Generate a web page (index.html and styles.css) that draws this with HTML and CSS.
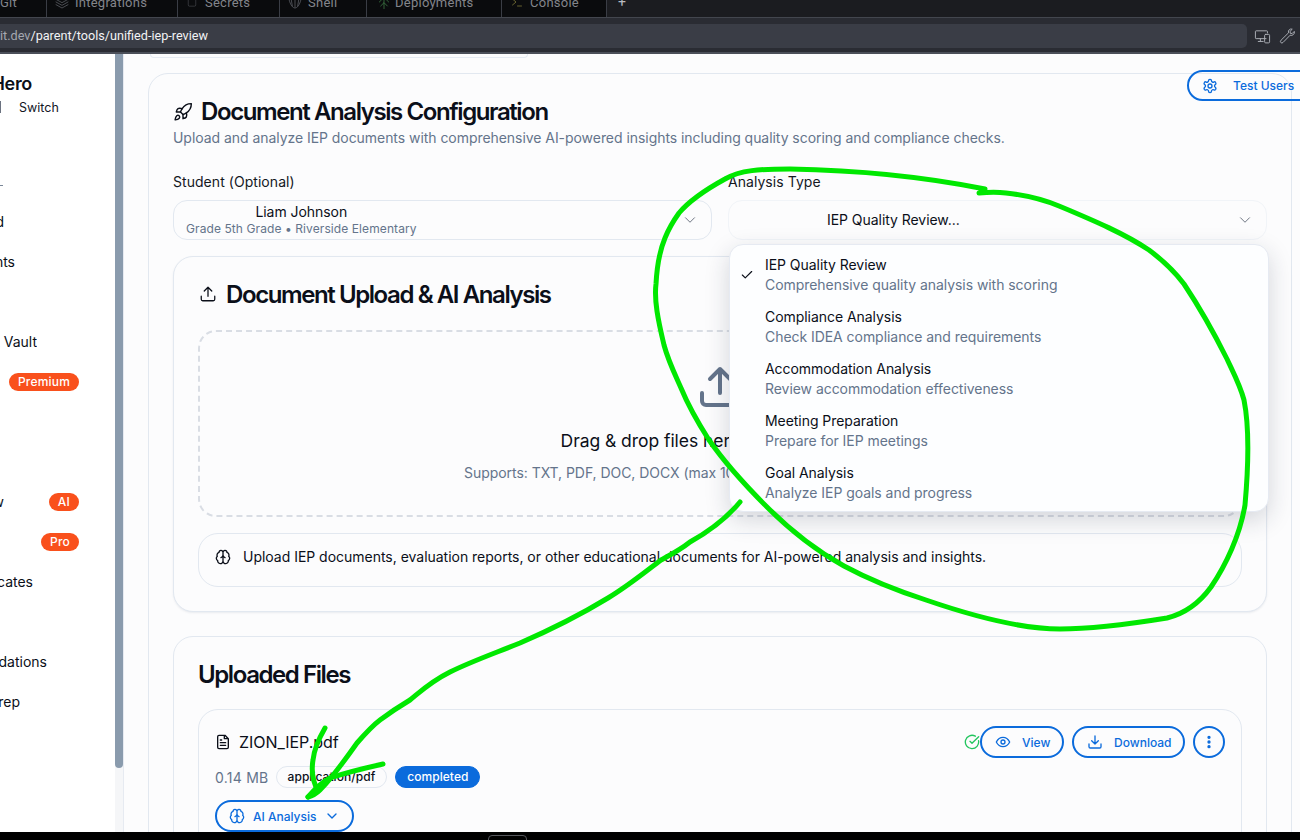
FILE: index.html
```html
<!DOCTYPE html>
<html lang="en">
<head>
<meta charset="utf-8">
<title>Unified IEP Review</title>
<link rel="stylesheet" href="styles.css">
</head>
<body>
<div class="app">
  <div class="tabs">
    <div class="tab tab-git"><span>Git</span></div>
    <div class="tab tab-int"><svg class="ti" viewBox="0 0 24 24"><path d="M12 3 3 8l9 5 9-5-9-5zM3 12l9 5 9-5M3 16l9 5 9-5"/></svg><span>Integrations</span></div>
    <div class="tab tab-sec"><svg class="ti ti-s" viewBox="0 0 24 24"><rect x="3" y="4" width="18" height="18" rx="3"/></svg><span>Secrets</span></div>
    <div class="tab tab-she"><svg class="ti" viewBox="0 0 24 24"><path d="M3 8c2 9 6 13 9 13s7-4 9-13M8 18 6 6M12 20V4M16 18l2-12"/></svg><span>Shell</span></div>
    <div class="tab tab-dep"><svg class="ti ti-g" viewBox="0 0 24 24"><path d="M12 22V8M5 12l7-7 7 7M7 18l5-5 5 5"/></svg><span>Deployments</span></div>
    <div class="tab tab-con"><svg class="ti ti-y" viewBox="0 0 24 24"><path d="m3 6 7 6-7 6M13 20h8"/></svg><span>Console</span></div>
    <div class="tab-plus">+</div>
  </div>
  <div class="urlrow">
    <div class="urlbar"><span class="url-host">it.dev</span><span class="url-path">/parent/tools/unified-iep-review</span></div>
    <svg class="chrome-ic" viewBox="0 0 24 24"><path d="M17 15H3a1 1 0 0 1-1-1V5a1 1 0 0 1 1-1h15a1 1 0 0 1 1 1v2M9 15v4M6 19h7"/><rect x="15" y="9" width="7" height="12" rx="1.5"/></svg>
    <svg class="chrome-ic" viewBox="0 0 24 24"><path d="M14.7 6.3a4 4 0 0 1 5.4-4.6l-3.1 3.1.3 2.7 2.7.3 3-3a4.5 4.5 0 0 1-5.9 5.4L7 20.5a2.1 2.1 0 0 1-3-3z"/></svg>
  </div>

  <div class="content">
    <aside class="sidebar">
      <div class="side-inner">
        <div class="brand">Hero</div>
        <div class="switch-row"><span class="switch-bar"></span><span>Switch</span></div>
        <div class="nav-dash"></div>
        <div class="nav-row"><span class="nav-label w-d">Dashboard</span></div>
        <div class="nav-row"><span class="nav-label w-s">Students</span></div>
        <div class="nav-row skip"><span class="nav-label w-v">Document Vault</span></div>
        <div class="nav-row"><span class="badge badge-prem">Premium</span></div>
        <div class="nav-row skip2"><span class="nav-label w-d">IEP Review</span><span class="badge">AI</span></div>
        <div class="nav-row"><span class="badge">Pro</span></div>
        <div class="nav-row"><span class="nav-label w-a">Advocates</span></div>
        <div class="nav-row skip"><span class="nav-label w-r">Recommendations</span></div>
        <div class="nav-row"><span class="nav-label w-m">Meeting Prep</span></div>
      </div>
      <div class="scrollbar"><div class="thumb"></div></div>
    </aside>

    <main class="main">
      <div class="prev-card"></div>
      <section class="card config">
        <h1 class="h-main"><svg class="ic-22" viewBox="0 0 24 24"><path d="M4.5 16.5c-1.5 1.3-2 5-2 5s3.700-.5 5-2c.7-.8.700-2.100-.1-2.900a2.200 2.200 0 0 0-2.900-.1z"/><path d="m12 15-3-3a22 22 0 0 1 2-3.950A12.900 12.900 0 0 1 22 2c0 2.700-.8 7.500-6 11a22.400 22.400 0 0 1-4 2z"/><path d="M9 12H4s.55-3.030 2-4c1.620-1.080 5 0 5 0M12 15v5s3.030-.55 4-2c1.080-1.620 0-5 0-5"/></svg>Document Analysis Configuration</h1>
        <p class="subtitle">Upload and analyze IEP documents with comprehensive AI-powered insights including quality scoring and compliance checks.</p>

        <div class="fields">
          <div class="field">
            <label class="field-label">Student (Optional)</label>
            <div class="select select-student">
              <div class="select-val"><div class="sv-name">Liam Johnson</div><div class="sv-sub">Grade 5th Grade • Riverside Elementary</div></div>
              <svg class="chev" viewBox="0 0 24 24"><path d="m6 9 6 6 6-6"/></svg>
            </div>
          </div>
          <div class="field">
            <label class="field-label">Analysis Type</label>
            <div class="select select-type">
              <div class="type-val">IEP Quality Review...</div>
              <svg class="chev" viewBox="0 0 24 24"><path d="m6 9 6 6 6-6"/></svg>
            </div>
            <div class="menu">
              <div class="menu-item"><svg class="check" viewBox="0 0 24 24"><path d="M20 6 9 17l-5-5"/></svg><div class="mi-t">IEP Quality Review</div><div class="mi-d">Comprehensive quality analysis with scoring</div></div>
              <div class="menu-item"><div class="mi-t">Compliance Analysis</div><div class="mi-d">Check IDEA compliance and requirements</div></div>
              <div class="menu-item"><div class="mi-t">Accommodation Analysis</div><div class="mi-d">Review accommodation effectiveness</div></div>
              <div class="menu-item"><div class="mi-t">Meeting Preparation</div><div class="mi-d">Prepare for IEP meetings</div></div>
              <div class="menu-item"><div class="mi-t">Goal Analysis</div><div class="mi-d">Analyze IEP goals and progress</div></div>
            </div>
          </div>
        </div>

        <section class="card inner upload">
          <h2 class="h-sec"><svg class="ic-18" viewBox="0 0 24 24"><path d="M21 15v4a2 2 0 0 1-2 2H5a2 2 0 0 1-2-2v-4M17 8l-5-5-5 5M12 3v12"/></svg>Document Upload &amp; AI Analysis</h2>
          <div class="drop">
            <svg class="drop-ic" viewBox="0 0 24 24"><path d="M21 15v4a2 2 0 0 1-2 2H5a2 2 0 0 1-2-2v-4M17 8l-5-5-5 5M12 3v12"/></svg>
            <div class="drop-t">Drag &amp; drop files here or click to select</div>
            <div class="drop-s">Supports: TXT, PDF, DOC, DOCX (max 10MB per file, up to 10 files per upload)</div>
          </div>
          <div class="info">
            <svg class="ic-16" viewBox="0 0 24 24"><path d="M12 5a3 3 0 1 0-5.997.125 4 4 0 0 0-2.526 5.770 4 4 0 0 0 .556 6.588A4 4 0 1 0 12 18zM12 5a3 3 0 1 1 5.997.125 4 4 0 0 1 2.526 5.770 4 4 0 0 1-.556 6.588A4 4 0 1 1 12 18zM15 13a4.500 4.500 0 0 1-3-4 4.500 4.500 0 0 1-3 4"/></svg>
            <span>Upload IEP documents, evaluation reports, or other educational documents for AI-powered analysis and insights.</span>
          </div>
        </section>

        <section class="card inner files">
          <h2 class="h-files">Uploaded Files</h2>
          <div class="file">
            <div class="file-top">
              <div class="file-name"><svg class="ic-16" viewBox="0 0 24 24"><path d="M15 2H6a2 2 0 0 0-2 2v16a2 2 0 0 0 2 2h12a2 2 0 0 0 2-2V7zM14 2v5h6M16 13H8M16 17H8M10 9H8"/></svg>ZION_IEP.pdf</div>
              <div class="file-actions">
                <svg class="ok" viewBox="0 0 24 24"><path d="M21.800 10A10 10 0 1 1 17 3.300M9 11l3 3L22 4"/></svg>
                <button class="btn btn-view"><svg class="ic-14" viewBox="0 0 24 24"><path d="M2 12s3.500-7 10-7 10 7 10 7-3.500 7-10 7-10-7-10-7z"/><circle cx="12" cy="12" r="3"/></svg><span>View</span></button>
                <button class="btn btn-dl"><svg class="ic-14" viewBox="0 0 24 24"><path d="M21 15v4a2 2 0 0 1-2 2H5a2 2 0 0 1-2-2v-4M7 10l5 5 5-5M12 15V3"/></svg><span>Download</span></button>
                <button class="btn btn-more"><svg class="ic-14 dots" viewBox="0 0 24 24"><circle cx="12" cy="5" r="1.500"/><circle cx="12" cy="12" r="1.500"/><circle cx="12" cy="19" r="1.500"/></svg></button>
              </div>
            </div>
            <div class="file-meta"><span class="size">0.14 MB</span><span class="pill">application/pdf</span><span class="pill pill-blue">completed</span></div>
            <button class="btn btn-ai"><svg class="ic-16" viewBox="0 0 24 24"><path d="M12 5a3 3 0 1 0-5.997.125 4 4 0 0 0-2.526 5.770 4 4 0 0 0 .556 6.588A4 4 0 1 0 12 18zM12 5a3 3 0 1 1 5.997.125 4 4 0 0 1 2.526 5.770 4 4 0 0 1-.556 6.588A4 4 0 1 1 12 18zM15 13a4.500 4.500 0 0 1-3-4 4.500 4.500 0 0 1-3 4"/></svg><span>AI Analysis</span><svg class="ic-14" viewBox="0 0 24 24"><path d="m6 9 6 6 6-6"/></svg></button>
          </div>
        </section>
      </section>
      <button class="btn btn-test"><svg class="ic-16" viewBox="0 0 24 24"><path d="M12.200 2h-.4a2 2 0 0 0-2 2v.2a2 2 0 0 1-1 1.700l-.4.250a2 2 0 0 1-2 0l-.15-.08a2 2 0 0 0-2.700.7l-.2.380a2 2 0 0 0 .7 2.700l.15.100a2 2 0 0 1 1 1.700v.5a2 2 0 0 1-1 1.750l-.15.080a2 2 0 0 0-.7 2.700l.2.380a2 2 0 0 0 2.700.7l.15-.08a2 2 0 0 1 2 0l.4.250a2 2 0 0 1 1 1.700v.2a2 2 0 0 0 2 2h.4a2 2 0 0 0 2-2v-.2a2 2 0 0 1 1-1.700l.4-.25a2 2 0 0 1 2 0l.15.080a2 2 0 0 0 2.700-.7l.2-.39a2 2 0 0 0-.7-2.700l-.15-.08a2 2 0 0 1-1-1.750v-.5a2 2 0 0 1 1-1.700l.15-.1a2 2 0 0 0 .7-2.700l-.2-.38a2 2 0 0 0-2.700-.7l-.15.080a2 2 0 0 1-2 0l-.4-.25a2 2 0 0 1-1-1.700V4a2 2 0 0 0-2-2z"/><circle cx="12" cy="12" r="3"/></svg><span>Test Users</span></button>
    </main>
  </div>

  <div class="dock"><div class="dock-notch"></div></div>

  <svg class="scribble" viewBox="0 0 1300 840">
    <path d="M979 193 C990 192 998 192 1006 193 C1025 195 1042 199 1059 206 C1095 221 1125 234 1149 250 C1165 262 1175 272 1184 284 C1202 311 1214 333 1227 359 C1233 372 1240 385 1244 400 C1249 425 1249 460 1245 505 C1240 535 1226 565 1211 587 C1198 605 1183 614 1167 618 C1130 624 1095 629 1060 629 C1030 629 990 622 926 600 C895 590 870 580 844 566 C815 550 790 530 767 507 C745 485 725 463 709 440 C695 418 688 405 681 388 C672 368 668 360 664 345 C658 320 654 300 656 284 C657 265 660 250 665 238 C669 228 674 220 679 213 C690 200 705 190 725 179 C740 170 760 169 790 169 C850 170 920 176 985 189"/>
    <path d="M740 502 C725 520 708 532 690 542 C680 550 672 554 661 560 C645 572 628 586 608 598 C580 615 550 630 520 643 C490 655 470 662 450 672 C430 682 420 692 410 700 C400 706 388 714 380 720 C372 726 364 735 357 743 C345 760 332 778 320 790 C316 794 312 796 308 797"/>
    <path d="M325 728 C318 740 314 750 313 760 C311 772 313 782 318 791"/>
    <path d="M383 764 C365 768 348 772 330 778 C322 782 314 790 308 797"/>
  </svg>
</div>
</body>
</html>
```

FILE: styles.css
```css
* { box-sizing: border-box; }
html, body { margin: 0; padding: 0; height: 100%; overflow: hidden; }
body { font-family: Inter, "Noto Sans", sans-serif; font-size: 14px; color: #0b0f19; background: #000; }
svg { fill: none; stroke: currentColor; stroke-width: 2; stroke-linecap: round; stroke-linejoin: round; flex: none; }

.app { position: relative; width: 1300px; height: 840px; display: flex; flex-direction: column; overflow: hidden; }

/* browser chrome */
.tabs { height: 18px; flex: none; display: flex; overflow: hidden; background: #1b1c20; border-bottom: 1px solid #43464e; font-family: Roboto, sans-serif; font-size: 13px; letter-spacing: .25px; color: #83858b; }
.tab { height: 17px; padding-bottom: 13px; display: flex; align-items: center; background: #0a0b0d; border-right: 1px solid #3a3d45; white-space: nowrap; }
.tab-git { width: 47px; }
.tab-int { width: 131px; padding-left: 7px; gap: 5px; }
.tab-sec { width: 102px; padding-left: 9px; gap: 8px; }
.tab-she { width: 87px; padding-left: 7px; gap: 5px; }
.tab-dep { width: 135px; padding-left: 9px; gap: 3px; }
.tab-con { width: 105px; padding-left: 9px; gap: 7px; }
.ti { width: 16px; height: 16px; stroke-width: 1.2; color: #5a5d63; }
.ti-s { width: 10px; height: 16px; }
.ti-g { color: #3d7a45; }
.ti-y { width: 12px; color: #a39a45; }
.tab-plus { height: 17px; padding: 0 0 13px 11px; display: flex; align-items: center; color: #b8bac0; font-size: 14px; }

.urlrow { height: 36px; flex: none; background: #2a2c33; border-bottom: 2px solid #4b4f59; padding: 6px 0 4px; display: flex; align-items: center; gap: 7px; }
.urlbar { width: 1247px; height: 24px; padding-bottom: 2px; background: #3a3d46; border-radius: 0 5px 5px 0; display: flex; align-items: center; font-family: Roboto, sans-serif; font-size: 12.650px; }
.url-host { color: #a5a8b0; }
.url-path { color: #f2f3f5; }
.chrome-ic { width: 17px; height: 17px; color: #a9acb3; stroke-width: 1.400; }

.content { flex: 1; min-height: 0; display: flex; background: #fcfcfd; }

/* sidebar */
.sidebar { width: 124px; flex: none; display: flex; border-right: 1px solid #e6eaf1; }
.side-inner { width: 115px; background: #fff; overflow: hidden; padding-top: 18px; }
.brand { width: 32px; height: 24px; display: flex; justify-content: flex-end; font-size: 18px; font-weight: 600; line-height: 24px; letter-spacing: -.3px; white-space: nowrap; overflow: hidden; }
.switch-row { margin-top: 1px; height: 20px; display: flex; align-items: center; gap: 18px; font-size: 12.500px; color: #12161f; }
.switch-bar { width: 1px; height: 12px; background: #6b7280; }
.nav-dash { width: 3px; height: 1px; margin-top: 68px; background: #7a8798; }
.nav-row { width: 79px; height: 40px; margin-top: 0; display: flex; align-items: center; justify-content: flex-end; }
.nav-dash + .nav-row { margin-top: 16px; }
.skip { margin-top: 40px; }
.skip2 { margin-top: 80px; justify-content: space-between; }
.nav-label { display: flex; justify-content: flex-end; white-space: nowrap; overflow: hidden; margin-right: auto; margin-bottom: 2px; flex: none; }
.skip2 .nav-label { margin-right: 0; }
.w-d { width: 4px; }
.w-s { width: 15px; }
.w-v { width: 37px; }
.w-a { width: 33px; }
.w-r { width: 47px; }
.w-m { width: 20px; }
.badge { height: 18px; padding: 0 9px; border-radius: 9px; background: #f9501c; color: #fff; font-size: 12px; font-weight: 500; line-height: 18px; letter-spacing: .2px; }
.scrollbar { width: 8px; background: #f5f6f8; }
.thumb { height: 714px; background: #8a9bad; border-radius: 0 0 4px 4px; }

/* main */
.main { flex: 1; min-width: 0; padding: 0 8px 0 24px; position: relative; overflow: hidden; letter-spacing: -.05px; }
.prev-card { width: 378px; height: 4px; margin-left: 2px; border: 1px solid #e6ebf3; border-top: 0; border-radius: 0 0 10px 10px; }
.card { border: 1px solid #e2e8f0; border-radius: 20px; background: #fcfcfd; }
.config { margin-top: 15px; height: 900px; padding: 24px; }
.h-main { margin: 0; display: flex; align-items: center; gap: 8px; font-size: 24px; font-weight: 600; line-height: 28px; letter-spacing: -1.410px; }
.ic-22 { width: 20px; height: 20px; stroke-width: 1.7; }
.subtitle { margin: 2px 0 0; font-size: 14px; line-height: 20px; color: #64748b; }
.fields { margin-top: 26px; display: grid; grid-template-columns: 1fr 1fr; gap: 16px; }
.field { position: relative; }
.field-label { display: block; height: 16px; line-height: 16px; margin-bottom: 10px; font-size: 14px; letter-spacing: .05px; color: #14181f; }
.select { height: 40px; border: 1px solid #e2e8f0; border-radius: 14px; display: flex; align-items: center; padding: 0 12px; }
.select-type { border-color: #f1f4f8; padding-bottom: 2px; }
.select-val { text-align: center; }
.sv-name { font-size: 14px; line-height: 16px; }
.sv-sub { font-size: 12px; line-height: 16px; margin-top: 1px; color: #64748b; letter-spacing: .09px; }
.type-val { margin-left: 86px; font-size: 14px; }
.chev { width: 18px; height: 18px; margin-left: auto; color: #6b7280; stroke-width: 1.300; }
.select-type .chev { margin-top: 2px; }
.menu { position: absolute; z-index: 5; left: 1px; top: 70px; width: 540px; height: 268px; padding: 4px 0; background: #fdfeff; border: 1px solid #e6eaf2; border-radius: 14px; box-shadow: 0 8px 24px rgba(30,41,59,.18); }
.menu-item { position: relative; height: 52px; padding: 6px 8px 6px 35px; line-height: 20px; }
.mi-t { font-size: 14px; color: #0b0f19; }
.mi-d { font-size: 14px; color: #64748b; }
.check { position: absolute; left: 10px; top: 19px; width: 14px; height: 14px; }

.inner { border-radius: 20px; }
.upload { margin-top: 16px; height: 356px; padding: 24px; box-shadow: 0 1px 2px rgba(100,116,139,.12); }
.h-sec { margin: 0; height: 26px; display: flex; align-items: center; gap: 9px; margin-left: 1px; font-size: 24px; font-weight: 600; letter-spacing: -1.410px; }
.ic-18 { width: 18px; height: 18px; stroke-width: 1.700; }
.drop { margin-top: 23px; height: 187px; border: 2px dashed #d9dde4; border-radius: 18px; display: flex; flex-direction: column; align-items: center; padding-top: 31px; }
.drop-ic { width: 48px; height: 48px; color: #64748b; stroke-width: 2; }
.drop-t { margin-top: 18px; font-size: 17.500px; font-weight: 400; line-height: 24px; }
.drop-s { margin-top: 10px; font-size: 14px; line-height: 20px; color: #64748b; }
.info { margin-top: 16px; height: 54px; border: 1px solid #e2e8f0; border-radius: 20px; display: flex; align-items: center; gap: 12px; padding: 0 16px 7px; letter-spacing: -.02px; }
.ic-16 { width: 16px; height: 16px; }

.files { margin-top: 24px; height: 400px; padding: 25px 24px 24px; }
.h-files { margin: 0; font-size: 24px; font-weight: 600; line-height: 26px; letter-spacing: -1.410px; }
.file { margin-top: 21px; height: 300px; padding: 16px; border: 1px solid #e2e8f0; border-radius: 20px; }
.file-top { display: flex; justify-content: space-between; align-items: center; height: 32px; }
.file-name { display: flex; align-items: center; gap: 8px; font-size: 16px; }
.file-actions { display: flex; align-items: center; gap: 8px; }
.ok { width: 16px; height: 16px; margin-right: -8px; color: #22c55e; }
.btn { font-family: inherit; font-size: 12px; font-weight: 500; height: 32px; display: flex; align-items: center; white-space: nowrap; background: transparent; color: #0b6bdc; border: 2px solid #0b6bdc; border-radius: 16px; padding: 0 12px; }
.ic-14 { width: 16px; height: 16px; }
.btn-view { width: 84px; gap: 11px; padding-left: 13px; }
.btn-dl { width: 113px; gap: 11px; padding-left: 13px; }
.btn-more { width: 32px; padding: 0 6px; }
.dots { fill: currentColor; }
.file-meta { margin-top: 8px; height: 22px; display: flex; align-items: center; gap: 8px; }
.size { color: #64748b; font-size: 14px; letter-spacing: .25px; margin-right: -1px; }
.pill { height: 22px; padding: 0 11px; border: 1px solid #e2e8f0; border-radius: 11px; font-size: 12px; font-weight: 500; line-height: 20px; letter-spacing: .05px; }
.pill-blue { background: #0b6bdc; border-color: #0b6bdc; color: #fff; }
.btn-ai { margin-top: 12px; width: 139px; gap: 8px; padding-left: 12px; }

.btn-test { position: absolute; top: 16px; left: 1063px; width: 130px; height: 31px; gap: 15px; padding-left: 13px; }

.dock { height: 8px; flex: none; background: #000; position: relative; overflow: hidden; }
.dock-notch { position: absolute; left: 488px; top: 3px; width: 39px; height: 12px; border: 1px solid #55575c; border-radius: 4px; }

.scribble { position: absolute; left: 0; top: 0; width: 1300px; height: 840px; z-index: 10; pointer-events: none; fill: none; stroke: #00e800; stroke-width: 5; stroke-linecap: round; stroke-linejoin: round; }
.scribble path { fill: none; }
```
